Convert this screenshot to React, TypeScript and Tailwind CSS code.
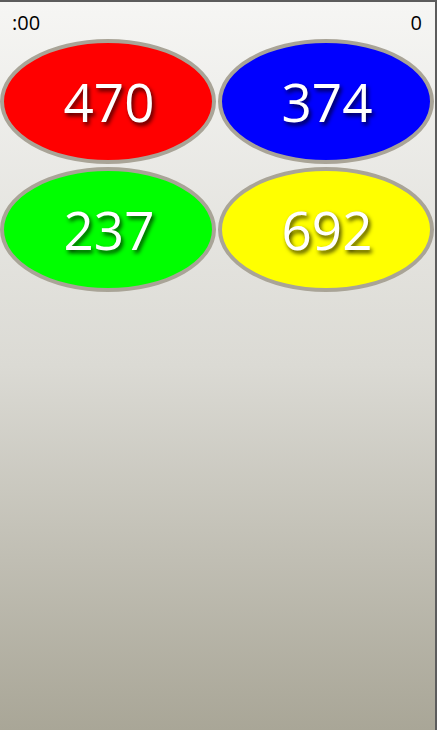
import React from 'react';

const BALLS = [
  { value: 470, color: 'bg-[#ff0000]' },
  { value: 374, color: 'bg-[#0000ff]' },
  { value: 237, color: 'bg-[#00ff00]' },
  { value: 692, color: 'bg-[#ffff00]' },
];

const App: React.FC = () => {
  return (
    <div
      className="h-[730px] w-[437px] overflow-hidden border-t-2 border-r-2 border-[#5c5c5c] bg-linear-to-b from-[#f6f6f4] via-[#dbdad4] to-[#a9a697] font-['Open_Sans',sans-serif]"
    >
      <div className="flex h-[37px] items-start justify-between pl-[12px] pr-[13px] pt-[7px] text-[20px] leading-[28px] text-black">
        <span>:00</span>
        <span>0</span>
      </div>
      <div className="grid w-[434px] grid-cols-2 gap-x-[2px] gap-y-[3px]">
        {BALLS.map((b) => (
          <div
            key={b.value}
            className={`flex h-[125px] w-[216px] items-center justify-center rounded-[50%] border-4 border-[#a9a497] ${b.color}`}
          >
            <span className="pl-[2px] text-[53px] leading-none text-white [text-shadow:2px_3px_4px_rgba(0,0,0,0.75)]">
              {b.value}
            </span>
          </div>
        ))}
      </div>
    </div>
  );
};

export default App;
